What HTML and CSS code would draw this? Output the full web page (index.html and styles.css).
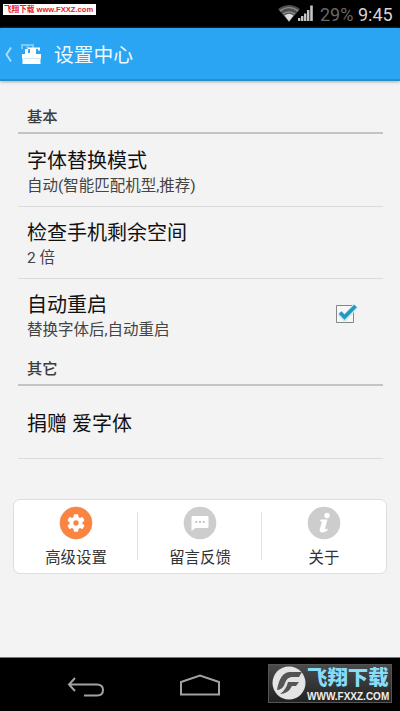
FILE: index.html
```html
<!DOCTYPE html>
<html lang="zh-CN">
<head>
<meta charset="utf-8">
<title>设置中心</title>
<link rel="stylesheet" href="styles.css">
</head>
<body>
<div class="status">
  <span class="site-tag">飞翔下载 www.FXXZ.com</span>
  <div class="indicators">
    <svg width="37" height="18" viewBox="0 0 37 18">
      <path d="M0 5Q11 -3 22 5L11 18Z" fill="#4b4b4b"/>
      <path d="M2 7Q11 0 20 7M5 10Q11 6 17 10" fill="none" stroke="#888" stroke-width="1.6"/>
      <path d="M6.500 11.500Q11 8 15.500 11.500L11 17.500Z" fill="#ddd"/>
      <path d="M20 17v-3h2.400v3zM23 17v-5h2.400v5zM26 17V9.500h2.400V17zM29 17V6h2.400v11zM32.200 17V1.500h2.600V17z" fill="#c4c4c4"/>
    </svg>
    <span class="battery">29%</span>
    <span class="clock">9:45</span>
  </div>
</div>
<header class="header">
  <svg width="44" height="52" viewBox="0 0 44 52">
    <path d="M11 19.500L6.500 26.500L11 33.500" fill="none" stroke="#a6dcff" stroke-width="2"/>
    <path d="M22 21v-4h11v3M27.500 17v6" fill="none" stroke="#7cc9fa" stroke-width="2"/>
    <path d="M22 26h3v-5h3v4h2v-4h-2v-1.500h12v3h-2V21h-2v5h5v5h-19z" fill="#fff"/>
    <path d="M22.500 31h18v5h-18z" fill="#fff"/>
    <path d="M22 30.500h19" stroke="#cbeaff" stroke-width="1"/>
  </svg>
  <h1>设置中心</h1>
</header>
<main class="content">
  <h2 class="section first">基本</h2>
  <div class="row">
    <div><div class="title">字体替换模式</div><div class="sub">自动(智能匹配机型,推荐)</div></div>
  </div>
  <div class="row">
    <div><div class="title">检查手机剩余空间</div><div class="sub">2 倍</div></div>
  </div>
  <div class="row last">
    <div><div class="title">自动重启</div><div class="sub">替换字体后,自动重启</div></div>
    <svg class="check" width="24" height="24" viewBox="0 0 24 24">
      <path d="M2.500 4.500h17v17h-17z" fill="#f7f7f7" stroke="#858585"/>
      <path d="M6 12l4.500 5L22 4.500" fill="none" stroke="#c5ebf7" stroke-width="6"/>
      <path d="M6 11.500l4.500 4.500L21.500 5" fill="none" stroke="#2598bf" stroke-width="3.800"/>
    </svg>
  </div>
  <h2 class="section">其它</h2>
  <div class="row single"><div class="title">捐赠 爱字体</div></div>
</main>
<nav class="card">
  <div class="item">
    <svg width="34" height="34" viewBox="-17 -17 34 34">
      <circle r="16" fill="#fb8441" stroke="#e98a55" stroke-width=".8"/>
      <g fill="#fff">
        <circle r="6.500"/>
        <rect x="-2.300" y="-8.700" width="4.600" height="17.400" rx="1"/>
        <rect x="-2.300" y="-8.700" width="4.600" height="17.400" rx="1" transform="rotate(60)"/>
        <rect x="-2.300" y="-8.700" width="4.600" height="17.400" rx="1" transform="rotate(120)"/>
      </g>
      <circle r="2.700" fill="#fb8441"/>
    </svg>
    <span>高级设置</span>
  </div>
  <div class="item">
    <svg width="34" height="34" viewBox="-17 -17 34 34">
      <circle r="16.300" fill="#cdcdcd"/>
      <path d="M-7.500-7h15q1 0 1 1v10q0 1-1 1H-4.500L-8.500 8V-6q0-1 1-1z" fill="#fff"/>
      <path d="M-4.800-2h2v2h-2zM-1-2h2v2h-2zM2.800-2h2v2h-2z" fill="#c4c4c4"/>
    </svg>
    <span>留言反馈</span>
  </div>
  <div class="item">
    <svg width="34" height="34" viewBox="-17 -17 34 34">
      <circle r="16.300" fill="#cdcdcd"/>
      <circle cx="3" cy="-7.500" r="2.700" fill="#fff"/>
      <path d="M-3.500-3.500H3.500L1 5.500q0 1.500 2.500 0v2Q0 10-3 9.300q-2-1 -1-3.800L-2-1.500h-2z" fill="#fff"/>
    </svg>
    <span>关于</span>
  </div>
</nav>
<footer class="navbar">
  <svg class="back" width="38" height="22" viewBox="0 0 38 22" fill="none" stroke="#a2a2a2" stroke-width="2">
    <path d="M8 2L2 8.500L8 15M2 8.500H30Q36 8.500 36 14Q36 19.500 30 19.500H17"/>
  </svg>
  <svg class="home" width="42" height="24" viewBox="0 0 42 24" fill="none" stroke="#a2a2a2" stroke-width="2">
    <path d="M2 21.500V9L21 2.500L40 9V21.500Z"/>
  </svg>
  <div class="watermark">
    <svg width="36" height="36" viewBox="0 0 36 36">
      <circle cx="18" cy="18" r="16.500" fill="#e4e4e4"/>
      <path d="M6 25Q9 7 19 7H31L28 12H21Q16 12 14 18Q12 25 6 25ZM17 17H28L25 21H21Q17 29 9 29Q15 25 17 17Z" fill="#555"/>
    </svg>
    <div class="brand"><span class="brand-name">飞翔下载</span><span class="brand-url">WWW.FXXZ.COM</span></div>
  </div>
</footer>
</body>
</html>
```

FILE: styles.css
```css
* { box-sizing: border-box; }
body {
  margin: 0;
  width: 400px;
  height: 711px;
  overflow: hidden;
  display: flex;
  flex-direction: column;
  background: #f3f3f3;
  font-family: Roboto, "Noto Sans CJK SC", sans-serif;
  white-space: nowrap;
}
svg { display: block; flex: none; }
.status {
  height: 28px;
  flex: none;
  background: #000;
  display: flex;
  justify-content: space-between;
  padding: 4px 6px 0 3px;
}
.site-tag {
  width: 93px;
  height: 11px;
  background: #fff;
  color: #e3202c;
  font: bold 7.6px/12px "Liberation Sans", "Noto Sans CJK SC", sans-serif;
  padding-left: 1px;
  overflow: hidden;
}
.indicators { display: flex; line-height: 22px; }
.battery { width: 34px; margin-left: 5px; color: #686868; font-size: 18px; }
.clock { width: 36px; margin-left: 4px; color: #d4d4d4; font-size: 18px; }
.header {
  height: 53px;
  flex: none;
  display: flex;
  background: #2aa5f3;
  border-bottom: 2px solid #248fcb;
  box-shadow: 0 1px 3px #aaa;
}
.header h1 {
  margin: 0 0 0 10px;
  color: #effaff;
  font-weight: 400;
  font-size: 19.8px;
  line-height: 55px;
}
.content { padding: 0 17px 0 18px; height: 418px; flex: none; }
.section {
  margin: 0;
  height: 27px;
  padding: 0 0 0 9px;
  border-bottom: 2px solid #c4c4c4;
  color: #3c3c3c;
  font-size: 15.3px;
  font-weight: 500;
  line-height: 21px;
}
.section.first { margin-top: 26px; }
.row {
  height: 72px;
  padding: 13px 0 0 9px;
  border-bottom: 1px solid #dcdcdc;
  display: flex;
  justify-content: space-between;
}
.first + .row { height: 73px; padding-top: 14px; }
.row.last { border: 0; height: 80px; }
.row.single { height: 73px; padding-top: 25px; }
.title { color: #111; font-size: 20px; line-height: 27px; }
.sub { color: #444; font-size: 15.5px; line-height: 23px; }
.check { margin: 9px 25px 0 0; }
.card {
  height: 75px;
  flex: none;
  margin: 0 13px;
  display: flex;
  background: #fff;
  border: 1px solid #dedede;
  border-radius: 7px;
}
.item {
  flex: 1;
  display: flex;
  flex-direction: column;
  align-items: center;
  padding-top: 6px;
  color: #333;
  font-size: 15.4px;
  line-height: 22px;
  background: linear-gradient(#e2e2e2, #e2e2e2) right 12px / 1px 48px no-repeat;
}
.item:last-child { background: none; }
.item span { margin-top: 7px; }
.navbar {
  margin-top: auto;
  height: 54px;
  flex: none;
  display: flex;
  background: #000;
  border-top: 1px solid #777;
}
.back { margin: 18px 0 0 67px; }
.home { margin: 15px 0 0 74px; }
.watermark {
  width: 124px;
  height: 39px;
  margin: 6px 0 0 47px;
  background: linear-gradient(#4b4b4b, #222);
  border: 1px solid #555;
  display: flex;
  padding-left: 2px;
}
.brand { display: flex; flex-direction: column; }
.brand-name {
  height: 26px;
  color: #87dcf8;
  font-weight: 900;
  font-size: 20.4px;
  line-height: 26px;
}
.brand-url {
  color: #eee;
  font: bold 10px/12px "Liberation Sans", sans-serif;
}
```
